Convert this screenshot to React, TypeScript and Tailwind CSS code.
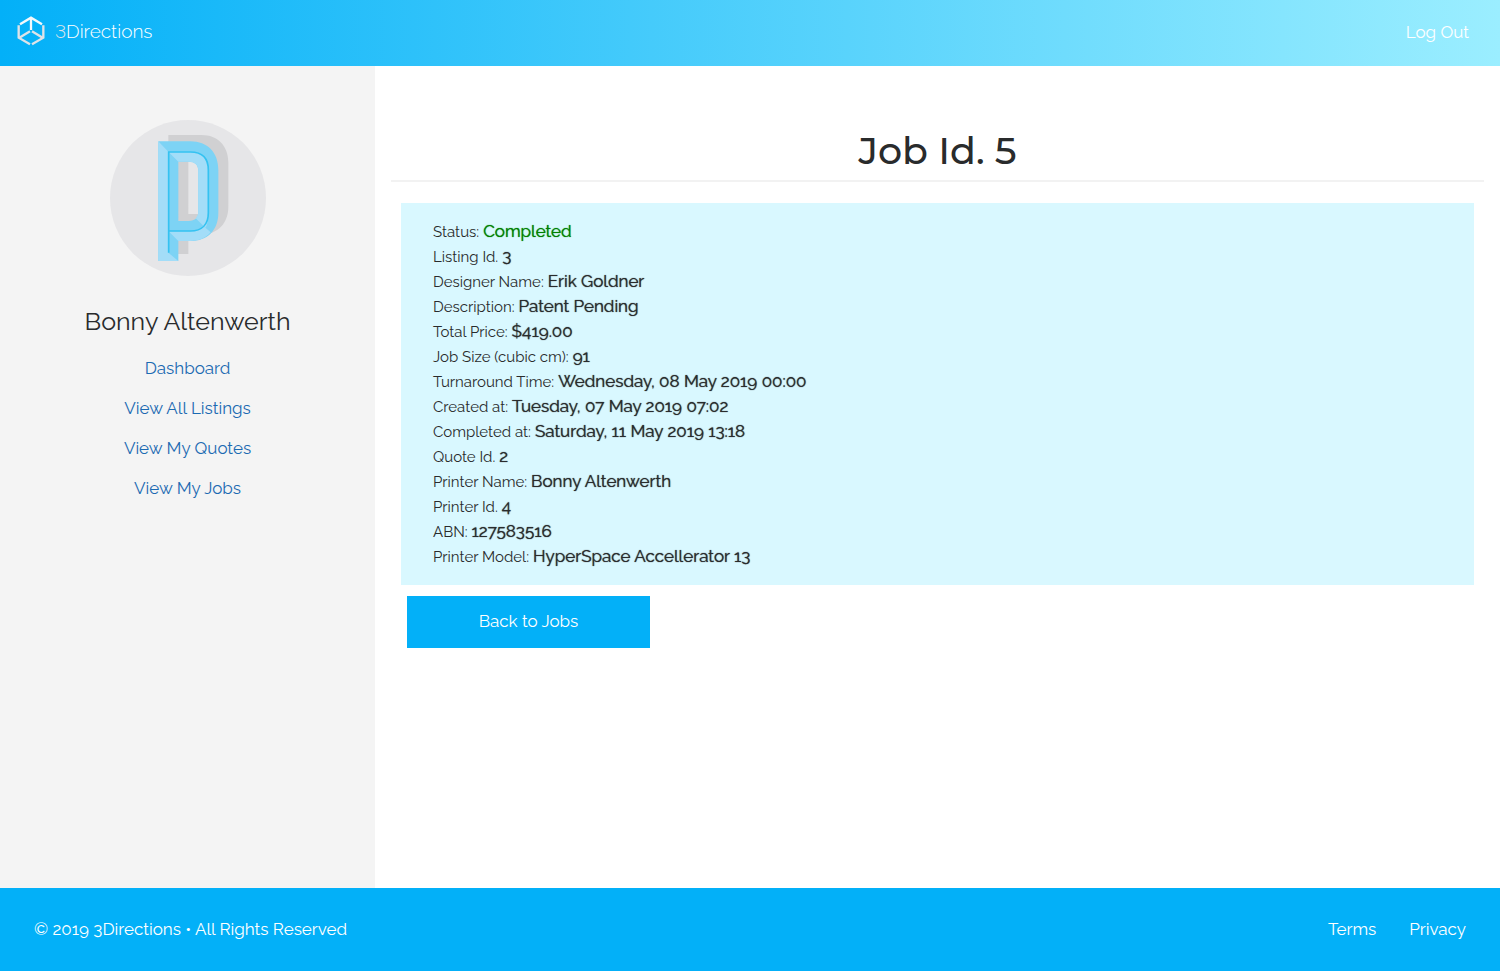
const navLinks = ["Dashboard", "View All Listings", "View My Quotes", "View My Jobs"];

const details: { label: string; value: string; tone?: string }[] = [
  { label: "Status:", value: "Completed", tone: "text-[#008000]" },
  { label: "Listing Id.", value: "3" },
  { label: "Designer Name:", value: "Erik Goldner" },
  { label: "Description:", value: "Patent Pending" },
  { label: "Total Price:", value: "$419.00" },
  { label: "Job Size (cubic cm):", value: "91" },
  { label: "Turnaround Time:", value: "Wednesday, 08 May 2019 00:00" },
  { label: "Created at:", value: "Tuesday, 07 May 2019 07:02" },
  { label: "Completed at:", value: "Saturday, 11 May 2019 13:18" },
  { label: "Quote Id.", value: "2" },
  { label: "Printer Name:", value: "Bonny Altenwerth" },
  { label: "Printer Id.", value: "4" },
  { label: "ABN:", value: "127583516" },
  { label: "Printer Model:", value: "HyperSpace Accellerator 13" },
];

function LogoMark() {
  return (
    <svg viewBox="0 0 84 90" className="h-[30px] w-7" fill="none" strokeWidth="7" aria-hidden="true">
      <g stroke="#f4f8fb">
        <path d="M9 25 42 5 75 25" />
        <path d="M42 5V42" />
      </g>
      <g stroke="#dfe3e8">
        <path d="M5 28V65L39 85" />
        <path d="M79 28V65L45 85" />
        <path d="M7 65 39 46" />
        <path d="M77 65 45 46" />
      </g>
    </svg>
  );
}

function Avatar() {
  return (
    <svg viewBox="29 30 468 468" className="size-39" role="img" aria-label="Profile picture">
      <circle cx="263" cy="264" r="234" fill="#e6e6e8" />
      <path
        fill="#d0d0d2"
        fillRule="evenodd"
        d="M204 75H304C352 75 384 108 384 156V290C384 340 352 373 304 373H264V432H204ZM264 135V312H296C316 312 324 303 324 284V165C324 145 315 135 296 135Z"
      />
      <path
        fill="#7dd3f5"
        fillRule="evenodd"
        d="M174 94H270C322 94 354 128 354 180V308C354 360 322 393 270 393H234V453H174ZM234 155V333H265C285 333 294 323 294 304V184C294 165 285 155 265 155Z"
      />
      <g fill="#a3ddf8">
        <path d="M174 94 204 125V428L234 453H174Z" />
        <path d="M204 125H270C305 125 324 145 324 180V308C324 328 320 350 315 353L286 325C291 320 294 313 294 304V184C294 165 285 155 265 155H234Z" />
        <path d="M204 363H270C286 363 299 358 309 348L331 367C316 384 296 393 270 393H234Z" />
      </g>
      <path
        fill="none"
        stroke="#34c2f1"
        strokeWidth="5"
        d="M205 428V126H270C305 126 324 145 324 180V308C324 343 305 363 270 363H205"
      />
    </svg>
  );
}

export default function App() {
  return (
    <div className="flex min-h-screen flex-col bg-white font-['Raleway','Lato',sans-serif] text-[17px] text-[#292b2c]">
      <header className="flex h-[66px] items-center justify-between bg-linear-to-r/srgb from-[#03b0f8] to-[#9beeff] pr-[31px] pl-[17px] text-white">
        <a href="#" className="flex items-center gap-2.5 pb-1">
          <LogoMark />
          <span className="text-[19px] font-light lining-nums">
            <span className="text-[#dfe3e8]">3</span>Directions
          </span>
        </a>
        <a href="#">Log Out</a>
      </header>

      <div className="flex grow">
        <aside className="flex w-1/4 flex-col items-center bg-[#f4f4f4] pt-[54px]">
          <Avatar />
          <h2 className="mt-7 text-[25px] leading-[34px]">Bonny Altenwerth</h2>
          <nav className="mt-2.5 flex flex-col items-center text-[#1b6ab2]">
            {navLinks.map((link) => (
              <a key={link} href="#" className="leading-10">
                {link}
              </a>
            ))}
          </nav>
        </aside>

        <main className="grow px-4 pt-[60px]">
          <h1 className="border-b-2 border-[#f2f2f2] pb-1 text-center font-['Montserrat','Inter',sans-serif] text-[38px] leading-[50px] font-medium">
            Job Id. 5
          </h1>
          <section className="mx-2.5 mt-[21px] bg-[#d9f8ff] px-8 py-4">
            <dl>
              {details.map(({ label, value, tone }) => (
                <div key={label} className="flex h-[25px] items-baseline gap-1 leading-[25px]">
                  <dt className="text-[15px]">{label}</dt>
                  <dd className={`[text-shadow:0_0_1px_currentColor] ${tone ?? ""}`}>{value}</dd>
                </div>
              ))}
            </dl>
          </section>
          <button type="button" className="mt-[11px] ml-4 h-13 w-[243px] bg-[#03b0f8] text-white">
            Back to Jobs
          </button>
        </main>
      </div>

      <footer className="flex h-[83px] items-center justify-between bg-[#03b0f8] px-[34px] text-white">
        <p>© 2019 3Directions • All Rights Reserved</p>
        <nav className="flex gap-[33px]">
          <a href="#">Terms</a>
          <a href="#">Privacy</a>
        </nav>
      </footer>
    </div>
  );
}
